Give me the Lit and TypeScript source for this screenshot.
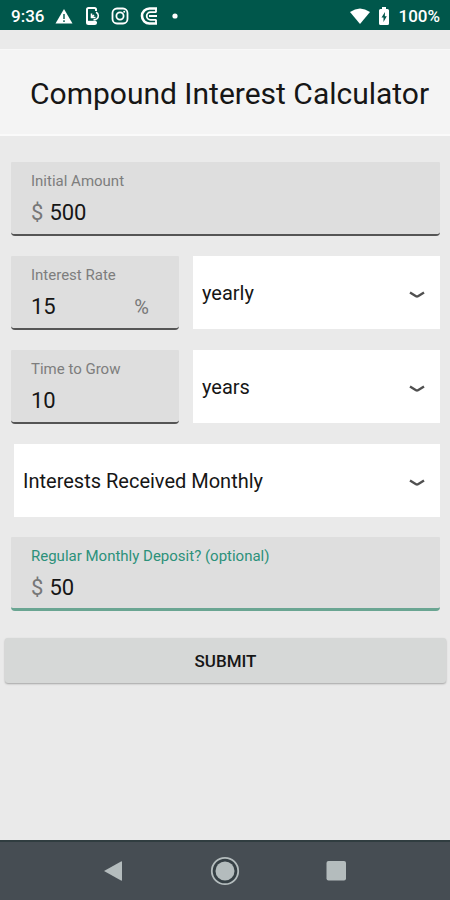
import { LitElement, html, css, svg } from "lit";
import { customElement } from "lit/decorators.js";

const chevron = html`<svg class="chevron" width="16" height="8" viewBox="0 0 16 8" aria-hidden="true">
  <path d="M1 1.400 L7 5.200 Q8 5.700 9 5.200 L15 1.400" fill="none" stroke="#505050" stroke-width="2.400" />
</svg>`;

const icon = (width: number, height: number, body: unknown) =>
  html`<svg width=${width} height=${height} viewBox="0 0 ${width} ${height}" aria-hidden="true">${body}</svg>`;

@customElement("app-root")
export class AppRoot extends LitElement {
  static styles = css`
    :host {
      display: flex;
      flex-direction: column;
      min-height: 100vh;
      background: #eaeaea;
      color: #161616;
      font-family: Roboto, "Liberation Sans", sans-serif;
    }
    * {
      box-sizing: border-box;
    }
    svg {
      display: block;
      flex: none;
    }
    .status {
      display: flex;
      align-items: center;
      justify-content: space-between;
      height: 30px;
      padding: 1px 10px 0 11px;
      background: #00574b;
      color: #fff;
      font-size: 17px;
      font-weight: 500;
      line-height: 20px;
    }
    .group {
      display: flex;
      align-items: center;
      gap: 11px;
    }
    .group.end {
      gap: 9px;
    }
    .title {
      margin: 19px 0 0;
      padding: 26px 0 22px 30px;
      border-top: 1px solid #f8f8f8;
      border-bottom: 2px solid #fafafa;
      background: #f4f4f4;
      font-size: 30px;
      font-weight: 400;
      line-height: 36px;
      white-space: nowrap;
    }
    form {
      display: flex;
      flex-direction: column;
      flex: 1;
      padding: 26px 10px 20px 11px;
      gap: 20px;
    }
    .row {
      display: grid;
      grid-template-columns: 168fr 247fr;
      gap: 14px;
    }
    .field {
      display: flex;
      flex-direction: column;
      height: 74px;
      padding: 10px 20px 0;
      background: #dedede;
      border-bottom: 2px solid #555;
      border-radius: 1px 1px 4px 4px;
    }
    .field.active {
      border-bottom: 3px solid #6aa592;
    }
    .label {
      color: #7d7d7d;
      font-size: 15px;
      line-height: 18px;
    }
    .active .label {
      color: #2c917a;
    }
    .entry {
      display: flex;
      align-items: center;
      gap: 6px;
      padding-top: 10px;
      color: #777;
      font-size: 22px;
      line-height: 26px;
    }
    .suffix {
      padding-right: 10px;
      font-size: 20px;
    }
    input {
      flex: 1;
      min-width: 0;
      width: 100%;
      height: 26px;
      padding: 0;
      border: 0;
      outline: 0;
      background: none;
      color: #161616;
      font: inherit;
    }
    .picker {
      position: relative;
      height: 73px;
    }
    .picker.wide {
      margin-left: 3px;
    }
    select {
      appearance: none;
      width: 100%;
      height: 100%;
      padding: 0 40px 0 9px;
      border: 0;
      border-radius: 0;
      background: #fff;
      color: #161616;
      font: 400 20px Roboto, "Liberation Sans", sans-serif;
    }
    .chevron {
      position: absolute;
      right: 15px;
      top: 35px;
      pointer-events: none;
    }
    button {
      padding: 0;
      border: 0;
      background: none;
      font: inherit;
      color: inherit;
    }
    .submit {
      height: 45px;
      margin: 7px -6px 0;
      border-radius: 3px;
      background: #d6d8d7;
      box-shadow: 0 1px 2px rgba(0, 0, 0, 0.3);
      font-size: 17px;
      font-weight: 500;
    }
    nav {
      display: flex;
      align-items: center;
      justify-content: center;
      gap: 82px;
      height: 60px;
      border-top: 2px solid #303d40;
      background: #464d53;
    }
  `;

  private statusBar() {
    return html`<div class="status">
      <div class="group">
        <span>9:36</span>
        ${icon(18, 16, svg`<path d="M9 1 L17.500 15.500 H.5 Z" fill="#fff"/><path d="M9 6v5M9 12.200v1.800" stroke="#00574b" stroke-width="1.400"/>`)}
        ${icon(16, 20, svg`<path d="M12 5V3.500Q12 2 10.500 2H4.500Q3 2 3 3.500V16.500Q3 18 4.500 18H10.500Q12 18 12 16.500V15.500" fill="none" stroke="#fff" stroke-width="2"/><path d="M3 14.800H12V18H3Z" fill="#fff"/><path d="M7.500 7.500V11.500H11.500M7.500 11.500L10 9M12 6.200A4 4 0 0 1 12.500 13.200M9.500 14L12.500 13.200" fill="none" stroke="#fff" stroke-width="1.600"/>`)}
        ${icon(18, 18, svg`<rect x="1.500" y="1.500" width="15" height="15" rx="4.500" fill="none" stroke="#fff" stroke-width="1.800"/><circle cx="9" cy="9" r="3.600" fill="none" stroke="#fff" stroke-width="1.800"/><circle cx="13.200" cy="4.800" r="1" fill="#fff"/>`)}
        ${icon(19, 20, svg`<g fill="none" stroke="#fff"><path d="M17 2.500H9.500A7.500 7.500 0 0 0 9.500 17.500H17" stroke-width="2.600"/><path d="M16.500 6.200H10.500A3.800 3.800 0 0 0 10.500 13.800H16.500" stroke-width="1.800"/><path d="M9 10H17M16 2V6M16 14V18" stroke-width="1.800"/></g>`)}
        ${icon(12, 6, svg`<circle cx="5" cy="3" r="2.600" fill="#fff"/>`)}
      </div>
      <div class="group end">
        ${icon(20, 16, svg`<path d="M0 4Q10-3 20 4L10 16Z" fill="#fff"/>`)}
        ${icon(10, 18, svg`<path d="M3 0H7V2H8.500Q10 2 10 3.500V16.500Q10 18 8.500 18H1.500Q0 18 0 16.500V3.500Q0 2 1.500 2H3Z" fill="#fff"/><path d="M6 5L2.500 10.500H4.500V15L7.800 9.300H5.800Z" fill="#00574b"/>`)}
        <span>100%</span>
      </div>
    </div>`;
  }

  private field(id: string, label: string, value: string, prefix = "", suffix = "", active = false) {
    return html`<div class="field ${active ? "active" : ""}">
      <label class="label" for=${id}>${label}</label>
      <div class="entry">
        ${prefix ? html`<span>${prefix}</span>` : ""}
        <input id=${id} inputmode="decimal" .value=${value} />
        ${suffix ? html`<span class="suffix">${suffix}</span>` : ""}
      </div>
    </div>`;
  }

  private picker(name: string, option: string, wide = false) {
    return html`<div class="picker ${wide ? "wide" : ""}">
      <select aria-label=${name}><option>${option}</option></select>
      ${chevron}
    </div>`;
  }

  render() {
    return html`
      ${this.statusBar()}
      <h1 class="title">Compound Interest Calculator</h1>
      <form @submit=${(e: Event) => e.preventDefault()}>
        ${this.field("amount", "Initial Amount", "500", "$")}
        <div class="row">
          ${this.field("rate", "Interest Rate", "15", "", "%")}
          ${this.picker("Rate period", "yearly")}
        </div>
        <div class="row">
          ${this.field("time", "Time to Grow", "10")}
          ${this.picker("Time unit", "years")}
        </div>
        ${this.picker("Compounding", "Interests Received Monthly", true)}
        ${this.field("deposit", "Regular Monthly Deposit? (optional)", "50", "$", "", true)}
        <button class="submit" type="submit">SUBMIT</button>
      </form>
      <nav>
        <button aria-label="Back">${icon(28, 28, svg`<path d="M4 14L21 4.500Q22 4 22 5V23Q22 24 21 23.500Z" fill="#b4bcbd"/>`)}</button>
        <button aria-label="Home">${icon(30, 30, svg`<circle cx="15" cy="15" r="13.200" fill="#364045" stroke="#b4bcbd" stroke-width="1.800"/><circle cx="15" cy="15" r="9.500" fill="#b4bcbd"/>`)}</button>
        <button aria-label="Recents">${icon(28, 28, svg`<rect x="4.500" y="4" width="19.500" height="19.500" rx="2" fill="#b4bcbd"/>`)}</button>
      </nav>
    `;
  }
}
